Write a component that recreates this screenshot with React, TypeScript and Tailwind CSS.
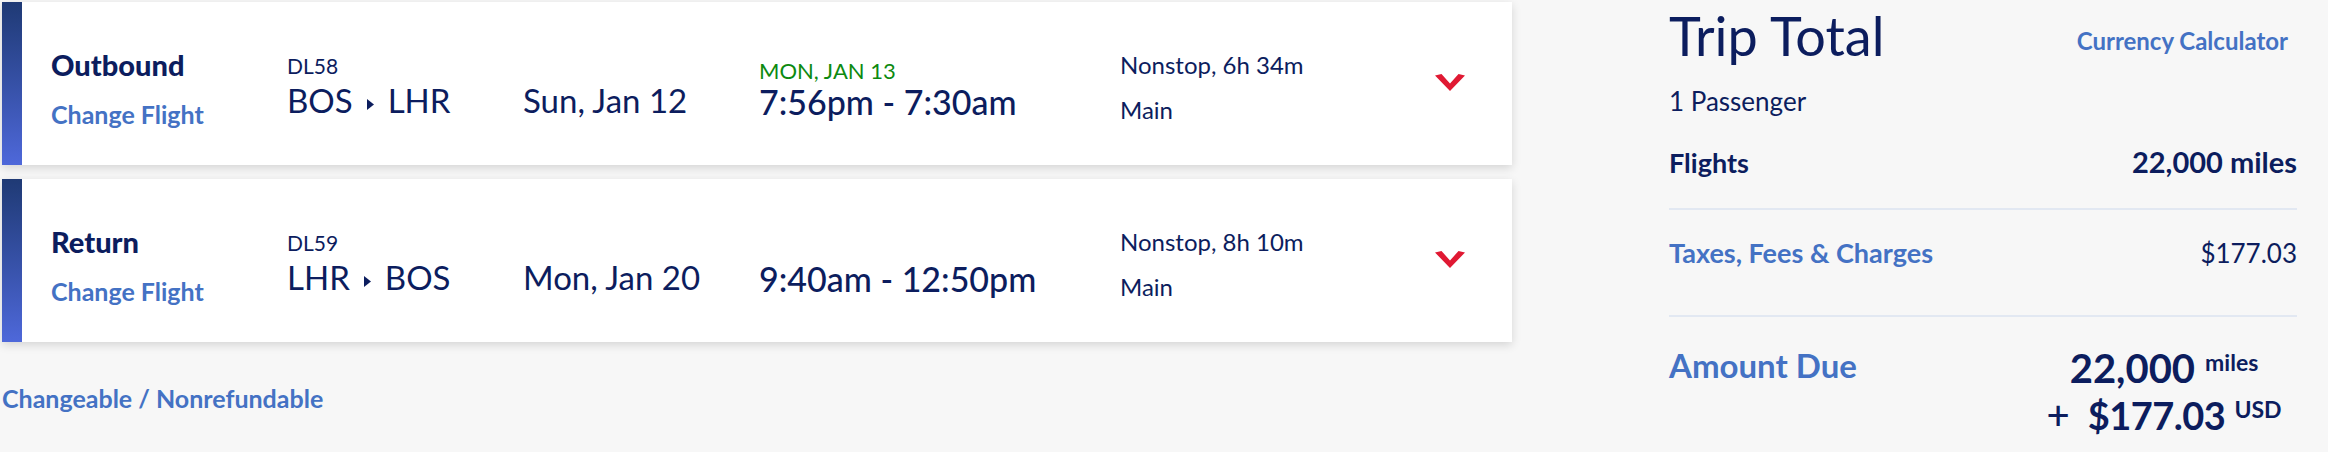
const LEGS = [
  {
    label: "Outbound",
    flight: "DL58",
    from: "BOS",
    to: "LHR",
    date: "Sun, Jan 12",
    nextDay: "MON, JAN 13",
    times: "7:56pm - 7:30am",
    duration: "Nonstop, 6h 34m",
    cabin: "Main",
  },
  {
    label: "Return",
    flight: "DL59",
    from: "LHR",
    to: "BOS",
    date: "Mon, Jan 20",
    nextDay: "",
    times: "9:40am - 12:50pm",
    duration: "Nonstop, 8h 10m",
    cabin: "Main",
  },
];

type Leg = (typeof LEGS)[number];

function Chevron() {
  return (
    <svg width="30" height="17" viewBox="0 0 30 17" aria-hidden>
      <polygon points="0,1.5 6.5,0 15,9.5 23.5,0 30,1.5 15,17" fill="#e01933" />
    </svg>
  );
}

function FlightCard({ leg }: { leg: Leg }) {
  return (
    <div className="flex h-[163px] w-[1510px] bg-white shadow-[0_3px_9px_rgba(0,0,0,0.14)]">
      <div className="w-[20px] shrink-0 bg-linear-to-b from-[#1f3a75] to-[#4e68da]" />

      <div className="w-[265px] shrink-0 pl-[29px] pt-[48px]">
        <div className="text-[29px] font-black leading-none">{leg.label}</div>
        <a className="mt-[23px] block text-[25px] font-bold leading-none text-[#4472c4]">
          Change Flight
        </a>
      </div>

      <div className="w-[236px] shrink-0 pt-[53px]">
        <div className="text-[21px] leading-none">{leg.flight}</div>
        <div className="mt-[8px] flex items-center text-[33px] leading-none">
          <span>{leg.from}</span>
          <svg width="7" height="11" viewBox="0 0 7 11" className="mx-[14px] mt-[8px]" aria-hidden>
            <polygon points="0,0 7,5.5 0,11" fill="currentColor" />
          </svg>
          <span>{leg.to}</span>
        </div>
      </div>

      <div className="w-[236px] shrink-0 pt-[82px] text-[33px] leading-none">{leg.date}</div>

      <div className="w-[361px] shrink-0 pt-[58px]">
        <div className="h-[22px] text-[22px] leading-none text-[#0d8a10]">{leg.nextDay}</div>
        <div className="mt-[3px] text-[34px] font-medium leading-none">{leg.times}</div>
      </div>

      <div className="w-[315px] shrink-0 pt-[51px] text-[24px] leading-none">
        <div>{leg.duration}</div>
        <div className="mt-[21px]">{leg.cabin}</div>
      </div>

      <div className="shrink-0 pt-[72px]">
        <Chevron />
      </div>
    </div>
  );
}

export default function App() {
  return (
    <div className="flex h-[452px] w-[2328px] overflow-hidden bg-[#f7f7f7] text-[#0c1d5e] [font-family:Lato,sans-serif]">
      <div className="flex w-[1512px] shrink-0 flex-col gap-[14px] pl-[2px] pt-[2px]">
        {LEGS.map((leg) => (
          <FlightCard key={leg.flight} leg={leg} />
        ))}
        <a className="mt-[30px] text-[25px] font-bold leading-none text-[#4472c4]">
          Changeable / Nonrefundable
        </a>
      </div>

      <aside className="ml-[157px] w-[628px] shrink-0">
        <div className="flex items-start justify-between pr-[9px]">
          <h2 className="mt-[9px] text-[54px] leading-none">Trip Total</h2>
          <a className="mt-[29px] text-[24px] font-bold leading-none text-[#4472c4]">
            Currency Calculator
          </a>
        </div>
        <p className="mt-[25px] text-[26px] leading-none">1 Passenger</p>

        <div className="mt-[33px] flex items-baseline justify-between border-b-2 border-[#e2e8f2] pb-[32px] leading-none">
          <span className="text-[27px] font-bold">Flights</span>
          <span className="text-[29px] font-bold">22,000 miles</span>
        </div>

        <div className="flex items-baseline justify-between border-b-2 border-[#e2e8f2] pb-[49px] pt-[29px] leading-none">
          <span className="text-[27px] font-bold text-[#4472c4]">Taxes, Fees &amp; Charges</span>
          <span className="text-[26px]">$177.03</span>
        </div>

        <div className="flex items-start justify-between border-b-2 border-[#e2e8f2] pb-[17px] pt-[31px]">
          <span className="mt-[1px] text-[33px] font-bold leading-none text-[#4472c4]">Amount Due</span>
          <div className="w-[266px] text-center font-bold leading-none">
            <div>
              <span className="text-[40px]">22,000</span>
              <span className="ml-[10px] align-[12px] text-[23px]">miles</span>
            </div>
            <div className="mt-[7px]">
              <span className="mr-[18px] text-[40px] font-medium">+</span>
              <span className="text-[38px] tracking-[-0.5px]">$177.03</span>
              <span className="ml-[9px] align-[12px] text-[23px]">USD</span>
            </div>
          </div>
        </div>
      </aside>
    </div>
  );
}
